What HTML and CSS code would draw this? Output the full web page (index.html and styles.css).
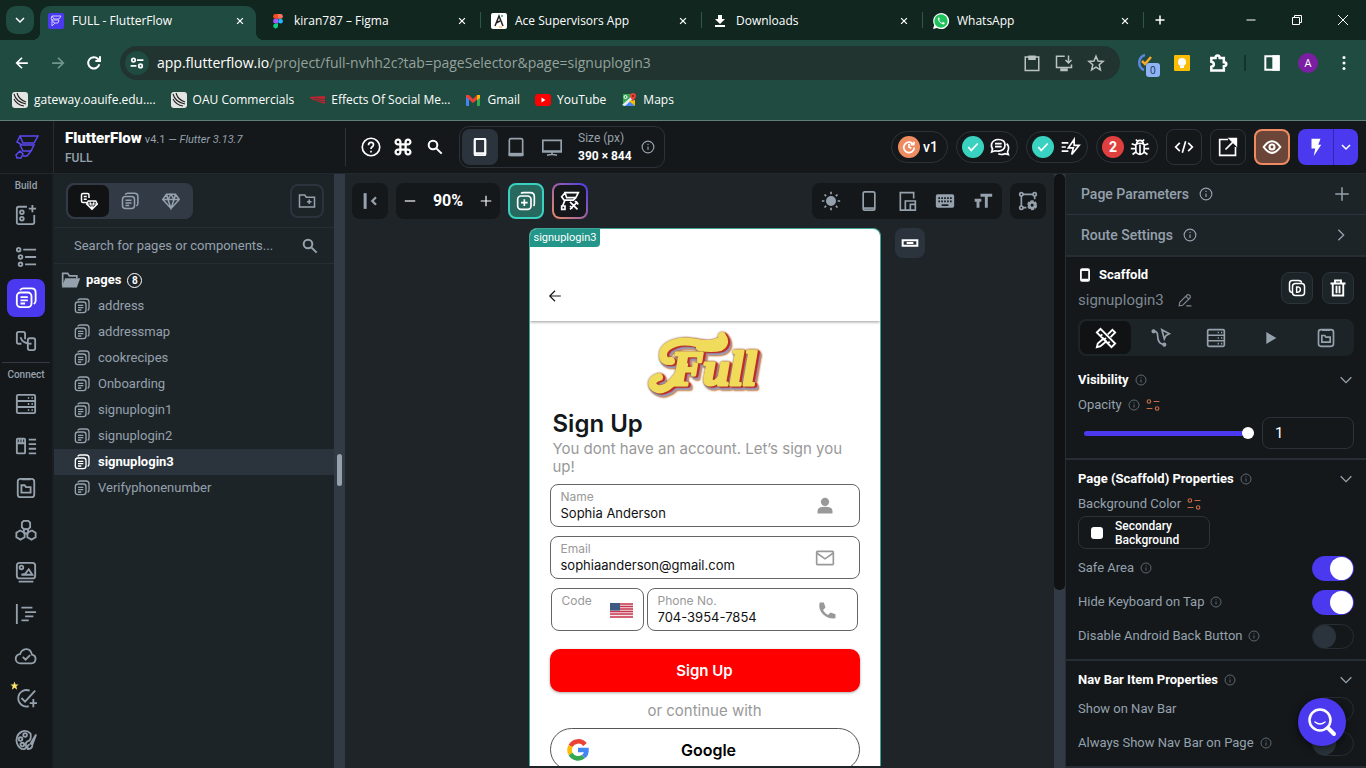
FILE: index.html
```html
<!DOCTYPE html>
<html lang="en">
<head>
<meta charset="utf-8">
<meta name="viewport" content="width=device-width, initial-scale=1">
<title>FULL - FlutterFlow</title>
<link rel="stylesheet" href="styles.css">
</head>
<body>
<svg class="sprite" aria-hidden="true">
  <symbol id="x" viewBox="0 0 24 24"><path d="M5 5l14 14M19 5L5 19"/></symbol>
  <symbol id="plus" viewBox="0 0 24 24"><path d="M12 3v18M3 12h18"/></symbol>
  <symbol id="minus" viewBox="0 0 24 24"><path d="M3 12h18"/></symbol>
  <symbol id="down" viewBox="0 0 24 24"><path d="M4 8l8 8 8-8"/></symbol>
  <symbol id="right" viewBox="0 0 24 24"><path d="M8 4l8 8-8 8"/></symbol>
  <symbol id="back" viewBox="0 0 24 24"><path d="M22 12H3M12 3l-9 9 9 9"/></symbol>
  <symbol id="fwd" viewBox="0 0 24 24"><path d="M2 12h19M12 3l9 9-9 9"/></symbol>
  <symbol id="info" viewBox="0 0 24 24"><circle cx="12" cy="12" r="10"/><path d="M12 11v6M12 6.500v2"/></symbol>
  <symbol id="search" viewBox="0 0 24 24"><circle cx="9" cy="9" r="6.500"/><path d="M14 14l8 8"/></symbol>
  <symbol id="pages" viewBox="0 0 24 24"><rect x="2" y="6" width="16" height="16" rx="4"/><path d="M5.500 3.500Q7 1.500 9 1.500h9q4.500 0 4.500 4.500v9q0 2.500-2 3.500M6 11h8M6 14.500h8M6 18h5"/></symbol>
  <symbol id="server" viewBox="0 0 24 24"><rect x="2" y="2" width="20" height="20" rx="1.500"/><path d="M2 8.700h20M2 15.300h20M14 5.400h1.500M18 5.400h1.500M14 12h1.500M18 12h1.500M14 18.700h1.500M18 18.700h1.500"/></symbol>
  <symbol id="clipfolder" viewBox="0 0 24 24"><rect x="3" y="2" width="18" height="20" rx="3"/><path d="M7 2.500h10M7 9v8h10v-6h-5l-1.500-2z"/></symbol>
  <symbol id="gem" viewBox="0 0 24 24"><path d="M6 3h12l5 7-11 12L1 10zM1 10h22M6 3l2 7 4 12 4-12 2-7M8 10l4-7 4 7"/></symbol>
  <symbol id="phone" viewBox="0 0 24 24"><rect x="5" y="1" width="14" height="22" rx="2"/><path d="M5 20.500h14"/></symbol>
  <symbol id="bind" viewBox="0 0 24 24"><circle cx="5" cy="6" r="3"/><path d="M13 6h10M1 18h10"/><circle cx="19" cy="18" r="3"/></symbol>
  <symbol id="ff" viewBox="0 0 24 24"><path d="M5 1h18l-4 7H8zM5 1L2 7l5 3h12l-3 6H8l-3-6M8 16l8 0-4 5H8M5 16l3 3-2 4H2l-1-3z"/></symbol>
  <symbol id="globe" viewBox="0 0 16 16"><rect width="16" height="16" rx="3" fill="#e3e5e2" stroke="none"/><path d="M2 2q2 8 12 10M5 1q2 7 9 9M2 7q3 6 10 7" stroke="#222" stroke-width="1.100"/></symbol>
</svg>

<header class="browser">
  <div class="tabstrip">
    <button class="tabmenu" aria-label="Search tabs"><svg class="i b s12"><use href="#down"/></svg></button>
    <div class="tab active">
      <svg class="s16" viewBox="0 0 16 16"><rect width="16" height="16" rx="2" fill="#4b39ef"/><path d="M4 3h9l-2 3H6zM4 3L3 6l2 1h6l-1 3H6L4 7v6l3-3" fill="none" stroke="#cfc9ff"/></svg>
      <span>FULL - FlutterFlow</span><button aria-label="Close tab"><svg class="i b s10"><use href="#x"/></svg></button>
    </div>
    <div class="tab">
      <svg class="s16" viewBox="0 0 16 16"><path d="M8 1H5.500a2.400 2.400 0 000 4.800H8z" fill="#f24e1e"/><path d="M8 1h2.500a2.400 2.400 0 010 4.800H8z" fill="#ff7262"/><path d="M8 5.800H5.500a2.400 2.400 0 000 4.800H8z" fill="#a259ff"/><circle cx="10.500" cy="8.200" r="2.400" fill="#1abcfe"/><path d="M8 10.600H5.500A2.400 2.400 0 108 13z" fill="#0acf83"/></svg>
      <span>kiran787 – Figma</span><button aria-label="Close tab"><svg class="i b s10"><use href="#x"/></svg></button>
    </div>
    <div class="tab">
      <svg class="s16" viewBox="0 0 16 16"><rect width="16" height="16" rx="2" fill="#fff"/><path d="M4 13L8 3l4 10M5 10l4-2" fill="none" stroke="#222" stroke-width="1.500"/><path d="M10 3h2" stroke="#23a58a" stroke-width="1.500"/><path d="M8 14h3" stroke="#f5a623"/></svg>
      <span>Ace Supervisors App</span><button aria-label="Close tab"><svg class="i b s10"><use href="#x"/></svg></button>
    </div>
    <div class="tab">
      <svg class="s16" viewBox="0 0 16 16"><path d="M6 2h4v4h3l-5 5-5-5h3zM3 12h10v2H3z" fill="#fff"/></svg>
      <span>Downloads</span><button aria-label="Close tab"><svg class="i b s10"><use href="#x"/></svg></button>
    </div>
    <div class="tab">
      <svg class="s16" viewBox="0 0 16 16"><path d="M0 16l1.200-4A8 8 0 114 14.900z" fill="#fff"/><circle cx="8" cy="8" r="6.700" fill="#1fc15b"/><path d="M5.300 4.500q-1 1.200 0 3 2 3.500 5 4 1.500-.3 1.500-1.600L10 9l-1 1Q7 9 6 7l.8-1-.6-1.600z" fill="#fff"/></svg>
      <span>WhatsApp</span><button aria-label="Close tab"><svg class="i b s10"><use href="#x"/></svg></button>
    </div>
    <button class="newtab" aria-label="New tab"><svg class="i b s12"><use href="#plus"/></svg></button>
    <div class="winbtns">
      <button aria-label="Minimize"><svg class="i s12"><use href="#minus"/></svg></button>
      <button aria-label="Restore"><svg class="i s12" viewBox="0 0 24 24"><path d="M3 7h14v14H3zM7 7V3h14v14h-4"/></svg></button>
      <button aria-label="Close"><svg class="i s12" viewBox="0 0 24 24"><path d="M2 2l20 20M22 2L2 22"/></svg></button>
    </div>
  </div>
  <div class="toolbar">
    <button class="nav" aria-label="Back"><svg class="i b s14"><use href="#back"/></svg></button>
    <button class="nav dim" aria-label="Forward"><svg class="i b s14"><use href="#fwd"/></svg></button>
    <button class="nav" aria-label="Reload"><svg class="i b s16" viewBox="0 0 24 24"><path d="M20 14a8.500 8.500 0 11-2-8l3 3M21 2v7h-7"/></svg></button>
    <div class="omnibox">
      <button class="site" aria-label="Site information"><svg class="i b s14" viewBox="0 0 24 24"><circle cx="6" cy="7" r="3"/><path d="M12 7h11M1 17h10"/><circle cx="18" cy="17" r="3"/></svg></button>
      <p class="url"><b>app.flutterflow.io</b>/project/full-nvhh2c?tab=pageSelector&amp;page=signuplogin3</p>
      <button class="nav" aria-label="Clipboard"><svg class="i s18" viewBox="0 0 24 24"><rect x="3" y="4" width="18" height="18"/><path d="M8 3h8v4H8z" fill="currentColor"/></svg></button>
      <button class="nav" aria-label="Install app"><svg class="i s18" viewBox="0 0 24 24"><path d="M13 3H2v15h20v-4M18 2v9M14 8l4 4 4-4"/><path d="M8 20h8v2H8z"/></svg></button>
      <button class="nav" aria-label="Bookmark"><svg class="i s18" viewBox="0 0 24 24"><path d="M12 3l2.700 6.300 6.800.6-5.200 4.500 1.600 6.700L12 17.500l-5.900 3.600 1.600-6.700L2.500 9.900l6.800-.6z"/></svg></button>
    </div>
    <div class="exts">
      <button class="nav" aria-label="Tasks extension"><svg class="s24" viewBox="0 0 24 24"><path d="M11 4a8 8 0 00-1 15" fill="none" stroke="#5b86e0" stroke-width="2.500"/><path d="M8 10l3 3 6-7" fill="none" stroke="#f7a928" stroke-width="2.500"/><rect x="12" y="12" width="14" height="14" rx="3" fill="#8fb4f6"/><text x="16" y="23" class="cnt">0</text></svg></button>
      <button class="nav" aria-label="Keep extension"><svg class="s16" viewBox="0 0 16 16"><rect width="16" height="16" rx="1" fill="#fbbc04"/><circle cx="8" cy="7" r="4" fill="#fff"/><path d="M6 11h4v2H6z" fill="#fff"/></svg></button>
      <button class="nav" aria-label="Extensions"><svg class="i b s20" viewBox="0 0 24 24"><path d="M4 6h5q0-3 2.500-3T14 6h5v5q3 0 3 2.300T19 16v5H4v-4.500q3-.5 3-3t-3-3z"/></svg></button>
      <span class="vsep"></span>
      <button class="nav" aria-label="Side panel"><svg class="i b s16" viewBox="0 0 24 24"><path d="M2 2h20v20H2z"/><path d="M14 2h8v20h-8z" fill="currentColor"/></svg></button>
      <button class="nav" aria-label="Profile"><span class="avatar">A</span></button>
      <button class="nav" aria-label="Menu"><svg class="s16" viewBox="0 0 16 16" fill="#fff"><circle cx="8" cy="2.500" r="1.500"/><circle cx="8" cy="8" r="1.500"/><circle cx="8" cy="13.500" r="1.500"/></svg></button>
    </div>
  </div>
  <nav class="bookmarks" aria-label="Bookmarks">
    <a href="#"><svg class="i s16"><use href="#globe"/></svg>gateway.oauife.edu....</a>
    <a href="#"><svg class="i s16"><use href="#globe"/></svg>OAU Commercials</a>
    <a href="#"><svg class="s16" viewBox="0 0 16 16"><path d="M0 5l16-1v8L4 8z" fill="#c8202f"/><path d="M4 6.500l12 1M6 8l10 2" stroke="#204b40" stroke-width=".7"/></svg>Effects Of Social Me...</a>
    <a href="#"><svg class="s16" viewBox="0 0 16 16"><path d="M1 3h3v11H2a1 1 0 01-1-1z" fill="#4285f4"/><path d="M12 3h3v10a1 1 0 01-1 1h-2z" fill="#34a853"/><path d="M1 3h3l4 4 4-4h3v2L8 11 1 5z" fill="#ea4335"/><path d="M12 3h3v3l-3 2z" fill="#fbbc04"/></svg>Gmail</a>
    <a href="#"><svg class="s16" viewBox="0 0 16 16"><rect y="2" width="16" height="12" rx="3" fill="#f00"/><path d="M6.500 5.500v5l4-2.500z" fill="#fff"/></svg>YouTube</a>
    <a href="#"><svg class="s16" viewBox="0 0 16 16"><path d="M2 2h9v12H2z" fill="#34a853"/><path d="M2 14l6-6 6 6z" fill="#4285f4"/><path d="M1 13L12 3l2 2-10 9z" fill="#e8eaed"/><path d="M8 9l6 5V8z" fill="#fbbc04"/><path d="M12 9q-3-3-3-5a3 3 0 016 0q0 2-3 5z" fill="#ea4335"/><circle cx="12" cy="4" r="1" fill="#7d1f18"/><circle cx="4.500" cy="5" r="1.500" fill="none" stroke="#fff"/></svg>Maps</a>
  </nav>
</header>

<div class="app">
  <header class="top">
    <a class="logo" href="#" aria-label="FlutterFlow home"><svg class="i s24 thin"><use href="#ff"/></svg></a>
    <div class="brand">
      <p><strong>FlutterFlow</strong> <span>v4.1 — <em>Flutter 3.13.7</em></span></p>
      <p class="proj">FULL</p>
    </div>
    <div class="tools">
      <button class="ic" aria-label="Help"><svg class="i s20" viewBox="0 0 24 24"><circle cx="12" cy="12" r="10.500"/><path d="M9 10q0-3.500 3-3.500t3 2.700q0 1.500-1.500 2.500T12 14.500M12 16.500v2"/></svg></button>
      <button class="ic" aria-label="Commands"><svg class="i b s18" viewBox="0 0 24 24"><path d="M8.500 8.500h7v7h-7zM8.500 8.500H5.500a3.200 3.200 0 113-3zM15.500 8.500v-3a3.200 3.200 0 113 3zM15.500 15.500h3a3.200 3.200 0 11-3 3zM8.500 15.500v3a3.200 3.200 0 11-3-3z"/></svg></button>
      <button class="ic" aria-label="Search"><svg class="i b s16"><use href="#search"/></svg></button>
    </div>
    <div class="devices">
      <button class="sel" aria-label="Phone"><svg class="i b s18"><use href="#phone"/></svg></button>
      <button aria-label="Tablet"><svg class="i s20" viewBox="0 0 24 24"><rect x="4" y="2" width="16" height="20" rx="2"/><path d="M4 20h16v2H4z" fill="currentColor"/></svg></button>
      <button aria-label="Desktop"><svg class="i s20" viewBox="0 0 24 24"><path d="M1 4h22v14H1zM1 17h22M12 18v3M6 22q6-2 12 0"/></svg></button>
      <p class="size">Size (px)<b>390 × 844</b></p>
      <svg class="i s14 grey"><use href="#info"/></svg>
    </div>
    <div class="status">
      <button class="pill ver"><span class="dot orange"><svg class="i b s14" viewBox="0 0 24 24"><path d="M19 7a9 9 0 102 6M21 3l-1 5h-5M12 7v5l4 2"/></svg></span>v1</button>
      <button class="pill" aria-label="Comments"><span class="dot teal"><svg class="i b s14" viewBox="0 0 24 24"><path d="M4 12l5 6L20 6"/></svg></span><svg class="i s20" viewBox="0 0 24 24"><path d="M10 3q8 0 8 6.500T10 17q-2 0-4-.5L2 18l1-4q-2-2-1-6 2-5 8-5zM6 8h8M6 11.500h8M20 8q3 3 2 7l-1 3 1 3-4-1q-5 2-8 0"/></svg></button>
      <button class="pill" aria-label="Actions"><span class="dot teal"><svg class="i b s14" viewBox="0 0 24 24"><path d="M4 12l5 6L20 6"/></svg></span><svg class="i s20" viewBox="0 0 24 24"><path d="M17 3l-7 10h6l-2 8 9-11h-6zM2 7h8M2 12h5M2 17h8"/></svg></button>
      <button class="pill" aria-label="Issues"><span class="dot red">2</span><svg class="i s20" viewBox="0 0 24 24"><path d="M7 9q5-3 10 0v7a5 5 0 01-10 0zM8 8a4 4 0 018 0M12 9v12M7 3l3 3M17 3l-3 3M2 8l5 2M22 8l-5 2M1 14h6M17 14h6M3 21l4-3M21 21l-4-3"/></svg></button>
      <button class="sq line" aria-label="View code"><svg class="i s20" viewBox="0 0 24 24"><path d="M7 7l-5 5 5 5M17 7l5 5-5 5M14 5l-4 14"/></svg></button>
      <button class="sq line" aria-label="Open"><svg class="i s20" viewBox="0 0 24 24"><path d="M12 3H2v19h19V12M9 15L19 5"/><path d="M14 2h8v8z" fill="currentColor"/></svg></button>
      <button class="sq eye" aria-label="Preview"><svg class="i s20" viewBox="0 0 24 24"><path d="M2 12q10-14 20 0-10 14-20 0z" stroke-width="2.500"/><circle cx="12" cy="12" r="3" stroke-width="2.500"/></svg></button>
      <div class="run"><button aria-label="Run"><svg class="s18" viewBox="0 0 24 24" fill="#fff"><path d="M6 1h12l-3 8h4L9 24l2-10H6z"/></svg></button><button aria-label="Run options"><svg class="i b s12"><use href="#down"/></svg></button></div>
    </div>
  </header>

  <div class="work">
    <nav class="rail" aria-label="Build and connect">
      <p>Build</p>
      <a href="#" aria-label="Widgets"><svg class="i s22" viewBox="0 0 24 24"><path d="M13 3H4q-2 0-2 2v15q0 2 2 2h15q2 0 2-2v-8M19 1v8M15 5h8"/><circle cx="7.500" cy="9" r="2"/><circle cx="7.500" cy="16" r="2"/></svg></a>
      <a href="#" aria-label="Widget tree"><svg class="i s22" viewBox="0 0 24 24"><circle cx="4" cy="4" r="2"/><circle cx="6" cy="12" r="2"/><circle cx="6" cy="20" r="2"/><path d="M9 4h14M11 12h12M11 20h12"/></svg></a>
      <a class="sel" href="#" aria-label="Pages"><svg class="i s22"><use href="#pages"/></svg></a>
      <a href="#" aria-label="Storyboard"><svg class="i s22" viewBox="0 0 24 24"><path d="M7 15H4q-2 0-2-2V4q0-2 2-2h5q2 0 2 2v6M14 15V11q0-2 2-2h4q2 0 2 2v9q0 2-2 2h-4q-2 0-2-2zM6 8q2 7 12 7"/></svg></a>
      <hr>
      <p>Connect</p>
      <a href="#" aria-label="Firestore"><svg class="i s22"><use href="#server"/></svg></a>
      <a href="#" aria-label="Data types"><svg class="i s22" viewBox="0 0 24 24"><rect x="2" y="4" width="9" height="16" rx="1"/><path d="M2 9h9M5 4v5M8 4v5M15 5h8M15 10h8M15 15h8M15 20h8"/></svg></a>
      <a href="#" aria-label="App state"><svg class="i s22"><use href="#clipfolder"/></svg></a>
      <a href="#" aria-label="API calls"><svg class="i s22" viewBox="0 0 24 24"><path d="M7.500 9V4l2-2h5l2 2v5l-2 2h-5zM1.500 15l4-2.500 5 2.500v5L6 22.500 1.500 20zM22.500 15l-4-2.500-5 2.500v5l4.500 2.500 4.500-2.500z"/><circle cx="12" cy="13.500" r="2.500"/></svg></a>
      <a href="#" aria-label="Media"><svg class="i s22" viewBox="0 0 24 24"><rect x="2" y="2" width="20" height="17" rx="3"/><circle cx="7" cy="7" r="2"/><path d="M7 15h12l-4-6-4 5zM4 22.500h16"/></svg></a>
      <a href="#" aria-label="Custom code"><svg class="i s22" viewBox="0 0 24 24"><path d="M2 1v22M7 5h12M11 10h12M11 14.500h9M7 19h8"/></svg></a>
      <a href="#" aria-label="Cloud"><svg class="i s22" viewBox="0 0 24 24"><path d="M6 20a5 5 0 01-.5-10Q7 5 12 4.500T18.500 10.500A4.800 4.800 0 0118 20zM8.500 13l3 3 5-5"/></svg></a>
      <a href="#" aria-label="Tests"><svg class="i s22" viewBox="0 0 24 24"><path d="M16 4A9 9 0 1015 21M7 12l4 4L22 4M20 13v9M16 17.500h8"/></svg><svg class="star" viewBox="0 0 24 24"><path d="M12 1l3 8h8l-6 5 2 9-7-5-7 5 2-9-6-5h8z"/></svg></a>
      <a href="#" aria-label="Theme"><svg class="i s22" viewBox="0 0 24 24"><path d="M17 5Q13 1 8 2.500C2 5 1 11 2 15q2 7 8 7 3-1 2-4-1-4 3-5 3-2 2-8zM23 6l-6 10 2 1zM16 17q-3 0-2 5 4 0 5-4"/><circle cx="11" cy="6.500" r="2"/><circle cx="6" cy="11" r="2"/><circle cx="8" cy="17" r="2"/></svg></a>
    </nav>

    <aside class="panel">
      <div class="phead">
        <div class="seg">
          <button class="sel" aria-label="Pages and components"><svg class="i s18" viewBox="0 0 24 24"><path d="M9 14H4q-2 0-2-2V4q0-2 2-2h6q2 0 2 2v4M5 6h4M5 9.500h4M11 12h10l2 4-7 7-7-7z"/><path d="M9 16h14M13 12l3 11 3-11" stroke-width="1.300"/></svg></button>
          <button aria-label="Pages"><svg class="i s18"><use href="#pages"/></svg></button>
          <button aria-label="Components"><svg class="i s18"><use href="#gem"/></svg></button>
        </div>
        <button class="addf" aria-label="New folder"><svg class="i s18" viewBox="0 0 24 24"><path d="M2 4h7l2 3h11v13H2zM15 10v6M12 13h6"/></svg></button>
      </div>
      <div class="find"><input type="text" aria-label="Search for pages or components" placeholder="Search for pages or components..."><svg class="i b s16"><use href="#search"/></svg></div>
      <div class="tree">
        <div class="folder"><svg class="s20" viewBox="0 0 24 24"><path d="M2 19V4h6l2 3h9v3" fill="none" stroke="#95a1ac" stroke-width="2"/><path d="M5 10h18l-4 11H1z" fill="#95a1ac"/></svg><b>pages</b><span class="num">8</span></div>
        <a href="#"><svg class="i s16"><use href="#pages"/></svg>address</a>
        <a href="#"><svg class="i s16"><use href="#pages"/></svg>addressmap</a>
        <a href="#"><svg class="i s16"><use href="#pages"/></svg>cookrecipes</a>
        <a href="#"><svg class="i s16"><use href="#pages"/></svg>Onboarding</a>
        <a href="#"><svg class="i s16"><use href="#pages"/></svg>signuplogin1</a>
        <a href="#"><svg class="i s16"><use href="#pages"/></svg>signuplogin2</a>
        <a class="sel" href="#"><svg class="i s16"><use href="#pages"/></svg>signuplogin3</a>
        <a href="#"><svg class="i s16"><use href="#pages"/></svg>Verifyphonenumber</a>
      </div>
    </aside>
    <div class="grip"><span></span></div>

    <main class="canvas">
      <div class="cbar">
        <button class="sq dark grey" aria-label="Collapse panel"><svg class="i b s18" viewBox="0 0 24 24"><path d="M5 3h1v18H5z" fill="currentColor"/><path d="M20 7l-5 5 5 5"/></svg></button>
        <div class="zoom"><button aria-label="Zoom out"><svg class="i s14"><use href="#minus"/></svg></button><b>90%</b><button aria-label="Zoom in"><svg class="i s14"><use href="#plus"/></svg></button></div>
        <button class="sq add" aria-label="Add page"><svg class="i s20" viewBox="0 0 24 24"><rect x="2" y="6" width="16" height="16" rx="4"/><path d="M6 3q1-1 3-1h8q5 0 5 5v8q0 2-1 3M10 10v8M6 14h8"/></svg></button>
        <button class="sq ai" aria-label="AI generate"><svg class="i s20" viewBox="0 0 24 24"><path d="M6 2h16l-3 6H8zM6 2L2 7l3 4M19 8l-3 3H6l-3 7M2 18h4v4H2zM12 13l9 9M21 13l-9 9M18 12l4 4M12 18l3 3"/></svg></button>
        <div class="modes">
          <button aria-label="Light mode"><svg class="i s20" viewBox="0 0 24 24"><circle cx="12" cy="12" r="5" fill="currentColor"/><path d="M12 1v3M12 20v3M1 12h3M20 12h3M4.200 4.200l2 2M17.800 17.800l2 2M4.200 19.800l2-2M17.800 6.200l2-2"/></svg></button>
          <button aria-label="Device frame"><svg class="i s20"><use href="#phone"/></svg></button>
          <button aria-label="Safe area"><svg class="i s20" viewBox="0 0 24 24"><path d="M9 23H4V2h16v7M10 23V12h12v11zM16 22v-6h5"/></svg></button>
          <button aria-label="Keyboard"><svg class="s20" viewBox="0 0 24 24" fill="currentColor"><rect x="1" y="4" width="22" height="16" rx="2"/><path d="M4 8.500h16M4 12.500h16" stroke="#14181b" stroke-width="2" stroke-dasharray="2 1.500"/><path d="M8 17h8" stroke="#14181b" stroke-width="2"/></svg></button>
          <button aria-label="Text scale"><svg class="i s20" viewBox="0 0 24 24"><path d="M9 5h14M16 5v15M2 11h8M6 11v9" stroke-width="3.500"/></svg></button>
        </div>
        <button class="sq dark grey" aria-label="Canvas settings"><svg class="i s20" viewBox="0 0 24 24"><circle cx="4" cy="4" r="2"/><circle cx="20" cy="4" r="2"/><circle cx="4" cy="20" r="2"/><path d="M6 4h12M4 6v12M20 6v4M6 20h4"/><circle cx="17" cy="17" r="4" stroke-width="4" stroke-dasharray="3 1.200"/><circle cx="17" cy="17" r="3.500" stroke-width="3"/></svg></button>
      </div>
      <div class="stage">
        <section class="phone" aria-label="signuplogin3 preview">
          <span class="tag">signuplogin3</span>
          <div class="appbar"><button aria-label="Go back"><svg class="i s14"><use href="#back"/></svg></button></div>
          <form class="form">
            <svg class="full" viewBox="0 0 116 66" role="img" aria-label="Full">
              <path d="M12 46q-9 3-6 9 5 6 14 1 10-7 17-22M24 30q-8 1-8-6 0-8 12-12 9-3 22 0t23-2q4-1 2-5 5 7-2 11-8 2-20 0"/>
              <text x="24" y="54">Full</text>
            </svg>
            <h1>Sign Up</h1>
            <p class="sub">You dont have an account. Let’s sign you up!</p>
            <div class="field"><label for="nm">Name</label><input id="nm" type="text" value="Sophia Anderson"><svg class="s20" viewBox="0 0 24 24" fill="#999"><circle cx="12" cy="7" r="5"/><path d="M3 21v-3q0-5 9-5t9 5v3z"/></svg></div>
            <div class="field"><label for="em">Email</label><input id="em" type="text" value="sophiaanderson@gmail.com"><svg class="i s20" viewBox="0 0 24 24"><rect x="2" y="4" width="20" height="16" rx="1"/><path d="M2 6l10 7 10-7"/></svg></div>
            <div class="pair">
              <div class="field code"><label for="cd">Code</label><input id="cd" type="text" value=""><svg class="flag" viewBox="0 0 23 15"><path d="M0 0h23v15H0z" fill="#f4e6e8"/><path d="M0 1h23M0 3.500h23M0 6h23M0 8.500h23M0 11h23M0 14h23" stroke="#c8374f" stroke-width="1.300"/><path d="M0 0h10v7.500H0z" fill="#3c5a82"/></svg></div>
              <div class="field tel"><label for="ph">Phone No.</label><input id="ph" type="text" value="704-3954-7854"><svg class="s20" viewBox="0 0 24 24" fill="#999"><path d="M2 3h5l2 6-3 3q2 4 6 6l3-3 6 2v5Q12 23 6 17T2 3z"/></svg></div>
            </div>
            <button type="button" class="go">Sign Up</button>
            <p class="or">or continue with</p>
            <button type="button" class="google"><svg class="s24" viewBox="0 0 24 24" fill="none" stroke-width="4.500"><path d="M19 6.500A8.800 8.800 0 004.500 8" stroke="#ea4335"/><path d="M4.500 8a9 9 0 000 8" stroke="#fbbc04"/><path d="M4.500 16a8.800 8.800 0 0013 2.500" stroke="#34a853"/><path d="M17.500 18.500q3.200-2.500 3-6.500H12" stroke="#4285f4"/></svg><span>Google</span></button>
          </form>
        </section>
        <button class="mini" aria-label="Component link"><svg class="i b s16" viewBox="0 0 24 24"><path d="M1 8h22v8H1zM7 12h10"/></svg></button>
      </div>
    </main>
    <div class="vbar"><span></span></div>

    <aside class="props">
      <div class="prow"><b>Page Parameters</b><svg class="i s14"><use href="#info"/></svg><button aria-label="Add parameter"><svg class="i s18"><use href="#plus"/></svg></button></div>
      <div class="prow last"><b>Route Settings</b><svg class="i s14"><use href="#info"/></svg><button aria-label="Open route settings"><svg class="i s16"><use href="#right"/></svg></button></div>
      <div class="ident">
        <div class="who">
          <p class="kind"><svg class="i b s14" viewBox="0 0 24 24"><rect x="5" y="2" width="14" height="20" rx="2"/><path d="M6 3.500h12M6 20h12"/></svg>Scaffold</p>
          <p class="name">signuplogin3<button aria-label="Rename"><svg class="i s14" viewBox="0 0 24 24"><path d="M2 22l1-6L16 3q3-1 5 2v3L8 21zM14 6l4 4M14 22h9"/></svg></button></p>
        </div>
        <button class="act" aria-label="Duplicate"><svg class="i s18" viewBox="0 0 24 24"><path d="M6 18Q2 18 2 14V6q0-4 4-4h8q4 0 4 3"/><rect x="6" y="6" width="16" height="16" rx="4"/><path d="M11.500 10.500v7h2q3-.5 3-3.500t-3-3.500z"/></svg></button>
        <button class="act" aria-label="Delete"><svg class="i s18" viewBox="0 0 24 24"><path d="M2 6h20M8 5V2h8v3M5 7v15h14V7M10 9v10M14 9v10" stroke-width="2.500"/></svg></button>
      </div>
      <div class="tabs">
        <button class="sel" aria-label="Properties"><svg class="i s22" viewBox="0 0 24 24"><path d="M2 6l4-4 16 16-4 4zM6 10l2-2M10 14l2-2M14 18l2-2M14 8l5-5 3 3-5 5M10 12l-7 6-1 4 4-1 7-6"/></svg></button>
        <button aria-label="Actions"><svg class="i s20" viewBox="0 0 24 24"><circle cx="3" cy="4" r="1.500" fill="currentColor"/><circle cx="16" cy="20" r="1.500" fill="currentColor"/><path d="M4 4q4 0 4 6 0 9 8 10M13 2l9 5-4 2-2 4z"/></svg></button>
        <button aria-label="Backend query"><svg class="i s20"><use href="#server"/></svg></button>
        <button aria-label="Animations"><svg class="s16" viewBox="0 0 24 24" fill="currentColor"><path d="M5 3v18l15-9z"/></svg></button>
        <button aria-label="State"><svg class="i s20"><use href="#clipfolder"/></svg></button>
      </div>
      <div class="group">
        <div class="ghead">Visibility<svg class="i s12"><use href="#info"/></svg><button aria-label="Collapse"><svg class="i s16"><use href="#down"/></svg></button></div>
        <div class="lab"><label for="op">Opacity</label><svg class="i s12"><use href="#info"/></svg><svg class="i s14 bind"><use href="#bind"/></svg></div>
        <div class="slide"><input id="op" type="range" min="0" max="1" step="0.1" value="1"><input type="text" aria-label="Opacity value" value="1"></div>
      </div>
      <div class="group">
        <div class="ghead">Page (Scaffold) Properties<svg class="i s12"><use href="#info"/></svg><button aria-label="Collapse"><svg class="i s16"><use href="#down"/></svg></button></div>
        <div class="lab">Background Color<svg class="i s14 bind"><use href="#bind"/></svg></div>
        <button class="color"><i></i><span>Secondary Background</span></button>
        <div class="opt"><label for="sa">Safe Area</label><svg class="i s12"><use href="#info"/></svg><input id="sa" type="checkbox" checked></div>
        <div class="opt"><label for="hk">Hide Keyboard on Tap</label><svg class="i s12"><use href="#info"/></svg><input id="hk" type="checkbox" checked></div>
        <div class="opt"><label for="db">Disable Android Back Button</label><svg class="i s12"><use href="#info"/></svg><input id="db" type="checkbox"></div>
      </div>
      <div class="group">
        <div class="ghead">Nav Bar Item Properties<svg class="i s12"><use href="#info"/></svg><button aria-label="Collapse"><svg class="i s16"><use href="#down"/></svg></button></div>
        <div class="opt"><label for="nb">Show on Nav Bar</label><input id="nb" type="checkbox"></div>
        <div class="opt"><label for="an">Always Show Nav Bar on Page</label><svg class="i s12"><use href="#info"/></svg><input id="an" type="checkbox"></div>
      </div>
    </aside>
  </div>
  <button class="fab" aria-label="Help search"><svg class="s30" viewBox="0 0 30 30" fill="none" stroke="#fff" stroke-linecap="round"><circle cx="13" cy="13" r="10.500" stroke-width="2.500"/><path d="M8 15q5 4 10 0" stroke-width="1.500"/><path d="M21 21l6 6" stroke-width="4"/></svg></button>
</div>
</body>
</html>
```
FILE: styles.css
```css
* { box-sizing: border-box; }
body { margin: 0; height: 100vh; overflow: hidden; display: flex; flex-direction: column; background: #14181b; color: #fff; font: 13px/18px Roboto, "Liberation Sans", sans-serif; }
p, h1 { margin: 0; }
a { color: inherit; text-decoration: none; }
button { font: inherit; color: inherit; background: none; border: 0; padding: 0; display: flex; align-items: center; justify-content: center; }
input { font: inherit; color: inherit; background: none; border: 0; padding: 0; margin: 0; min-width: 0; }
svg { flex: none; display: block; overflow: visible; }
.sprite { position: absolute; width: 0; height: 0; }
.i { fill: none; stroke: currentColor; stroke-width: 2; }
.b { stroke-width: 3; }
.thin { stroke-width: 1.500; }
.s10 { width: 10px; height: 10px; }
.s12 { width: 12px; height: 12px; }
.s14 { width: 14px; height: 14px; }
.s16 { width: 16px; height: 16px; }
.s18 { width: 18px; height: 18px; }
.s20 { width: 20px; height: 20px; }
.s22 { width: 22px; height: 22px; }
.s24 { width: 24px; height: 24px; }
.s30 { width: 30px; height: 30px; }
.grey { color: #95a1ac; }

/* browser frame */
.browser { flex: none; background: #204b40; border-bottom: 1px solid #5f7f76; font-family: "Open Sans", "Noto Sans", sans-serif; font-size: 12px; }
.tabstrip { display: flex; align-items: center; height: 40px; background: #11261f; padding-left: 6px; }
.tabmenu { width: 28px; height: 28px; border-radius: 10px; background: #204b40; margin-right: 6px; }
.tab { display: flex; align-items: center; gap: 8px; width: 216px; height: 34px; margin: 6px 5px 0 0; padding: 0 8px 5px; position: relative; }
.tab span { flex: 1; white-space: nowrap; }
.tab button { width: 16px; height: 16px; }
.tab.active { background: #204b40; border-radius: 10px 10px 0 0; margin-right: 6px; }
.tab.active::before, .tab.active::after { content: ""; position: absolute; bottom: 0; width: 8px; height: 8px; }
.tab.active::before { left: -8px; background: radial-gradient(circle at 0 0, transparent 8px, #204b40 8px); }
.tab.active::after { right: -8px; background: radial-gradient(circle at 100% 0, transparent 8px, #204b40 8px); }
.tab:not(.active)::after { content: ""; position: absolute; right: -3px; top: 6px; width: 1px; height: 16px; background: #2b5a4d; }
.newtab { width: 28px; height: 28px; }
.winbtns { display: flex; margin-left: auto; }
.winbtns button { width: 46px; height: 40px; }
.toolbar { display: flex; align-items: center; height: 46px; padding: 0 4px; }
.nav { width: 36px; height: 28px; }
.dim { color: #71968b; }
.omnibox { flex: 1; display: flex; align-items: center; height: 34px; margin-left: 8px; padding: 0 8px 0 5px; border-radius: 17px; background: #22342f; }
.omnibox .nav { width: 32px; color: #b9c4c0; }
.site { width: 24px; height: 24px; border-radius: 12px; background: #204b40; }
.url { flex: 1; margin-left: 8px; font-size: 14px; color: #93a39e; white-space: nowrap; }
.url b { font-weight: 400; color: #fff; }
.exts { display: flex; align-items: center; margin-left: 8px; }
.vsep { width: 2px; height: 16px; margin: 0 8px; background: #13342b; }
.cnt { font-size: 10px; fill: #1a2b50; }
.avatar { width: 20px; height: 20px; border-radius: 10px; background: #7b1fa2; font-size: 11px; line-height: 20px; }
.bookmarks { display: flex; align-items: center; gap: 15px; height: 34px; padding: 0 12px 6px; }
.bookmarks a { display: flex; align-items: center; gap: 6px; white-space: nowrap; }

/* app header */
.app { flex: 1; min-height: 0; display: flex; flex-direction: column; position: relative; }
.top { display: flex; align-items: center; height: 53px; flex: none; border-bottom: 1px solid #22282d; }
.logo { width: 54px; height: 100%; display: flex; align-items: center; justify-content: center; border-right: 1px solid #262d34; color: #5b48f5; }
.brand { width: 292px; padding-left: 11px; line-height: 20px; border-right: 1px solid #2b323a; color: #95a1ac; white-space: nowrap; }
.brand strong { font-size: 15px; font-weight: 900; color: #fff; }
.brand span { font-size: 11px; }
.brand .proj { font-size: 12px; line-height: 16px; font-weight: 500; }
.tools { display: flex; padding: 0 8px 0 9px; }
.ic { width: 32px; height: 32px; }
.devices { display: flex; align-items: center; height: 42px; padding: 0 9px 0 2px; border: 1px solid #2b323a; border-radius: 10px; color: #95a1ac; }
.devices button { width: 36px; height: 36px; }
.devices .sel { background: #2b343d; border-radius: 8px; color: #fff; }
.size { width: 71px; padding-left: 8px; font-size: 12px; white-space: nowrap; }
.size b { display: block; color: #fff; font-size: 12px; font-weight: 700; }
.size, .size b { line-height: 18px; }
.status { display: flex; align-items: center; gap: 8px; margin-left: auto; padding-right: 8px; }
.pill { height: 32px; padding: 0 7px 0 5px; gap: 6px; border: 1px solid #2b323a; border-radius: 16px; font-size: 14px; font-weight: 500; }
.pill.ver { padding: 0 9px 0 6px; gap: 3px; }
.dot { width: 22px; height: 22px; border-radius: 11px; display: flex; align-items: center; justify-content: center; font-weight: 700; }
.orange { background: #ee8b60; }
.teal { background: #39d2c0; }
.red { background: #df3f3f; }
.sq { width: 36px; height: 36px; border-radius: 8px; flex: none; }
.line { border: 1px solid #2b323a; }
.eye { background: #6b4538; border: 2px solid #ee8b60; }
.run { display: flex; height: 36px; border-radius: 8px; background: #4b39ef; }
.run button { width: 35px; }
.run button + button { width: 25px; border-left: 1px solid #3425b8; }

/* rail and page list */
.work { flex: 1; min-height: 0; display: flex; }
.rail { width: 54px; flex: none; border-right: 2px solid #1a1f24; color: #95a1ac; font-size: 10px; font-weight: 500; text-align: center; overflow: hidden; }
.rail p { padding-top: 3px; line-height: 17px; }
.rail a { height: 42px; display: flex; align-items: center; justify-content: center; position: relative; }
.rail a.sel { height: 38px; margin: 1px 7px 3px; border-radius: 8px; background: #4b39ef; color: #fff; }
.rail hr { height: 1px; margin: 0 2px; border: 0; background: #323b45; }
.star { position: absolute; left: 10px; top: 4px; width: 9px; height: 9px; fill: #f9e36b; }
.panel { width: 280px; flex: none; background: #1d2428; color: #95a1ac; }
.phead { display: flex; align-items: center; justify-content: space-between; height: 54px; padding: 0 10px 0 12px; border-bottom: 1px solid #262d34; }
.seg { display: flex; height: 36px; padding: 2px; border-radius: 8px; background: #323b45; }
.seg button { width: 41px; }
.seg .sel { background: #101213; border-radius: 7px; color: #fff; }
.addf { width: 34px; height: 34px; border: 2px solid #2b343d; border-radius: 8px; }
.find { display: flex; align-items: center; height: 36px; padding: 0 16px 0 20px; border-bottom: 1px solid #262d34; }
.find input { flex: 1; }
.find input::placeholder { color: #95a1ac; opacity: 1; }
.tree { padding-top: 3px; }
.folder { display: flex; align-items: center; height: 26px; padding-left: 7px; color: #fff; }
.folder b { margin: 0 6px 0 5px; }
.num { width: 15px; height: 15px; border: 1px solid #fff; border-radius: 8px; font-size: 10px; line-height: 13px; text-align: center; font-weight: 700; }
.tree a { display: flex; align-items: center; gap: 8px; height: 26px; padding-left: 20px; }
.tree a.sel { background: #2b343d; color: #fff; font-weight: 700; }
.grip, .vbar { width: 11px; flex: none; background: #323b45; }
.grip span { display: block; width: 5px; height: 32px; margin: 280px auto 0; border-radius: 3px; background: #95a1ac; }
.vbar span { display: block; height: 70%; border-radius: 5px; background: #101213; }

/* canvas */
.canvas { flex: 1; min-width: 0; display: flex; flex-direction: column; background: #1f2428; padding-bottom: 2px; }
.cbar { display: flex; gap: 8px; flex: none; padding: 9px 8px 9px 7px; }
.dark, .zoom, .modes { background: #14181b; border-radius: 8px; }
.zoom { display: flex; align-items: center; justify-content: space-between; width: 104px; padding: 0 7px; font-size: 16px; }
.add { background: #27695f; border: 2px solid #39d2c0; }
.ai { border: 2px solid transparent; background: linear-gradient(#14181b, #14181b) padding-box, linear-gradient(45deg, #ee8b60, #4b39ef) border-box; }
.modes { display: flex; margin-left: auto; color: #95a1ac; }
.modes button { width: 38px; height: 36px; }
.stage { flex: 1; min-height: 0; display: grid; grid-template-columns: 1fr 352px 1fr; gap: 14px; padding-left: 10px; overflow: hidden; }
.phone { grid-column: 2; position: relative; background: #fff; color: #14181b; border: 1px solid #3fa596; border-bottom: 0; border-radius: 8px 8px 0 0; overflow: hidden; font-family: Inter, Roboto, sans-serif; }
.tag { position: absolute; left: 0; top: 0; padding: 0 4px; border-radius: 0 0 4px 0; background: #249689; color: #fff; font-family: Roboto, sans-serif; font-size: 11px; line-height: 18px; }
.appbar { height: 92px; padding: 60px 0 0 18px; box-shadow: 0 1px 3px #0006; }
.form { padding: 10px 20px 0; display: flex; flex-direction: column; }
.full { width: 116px; height: 66px; align-self: center; filter: drop-shadow(0 0 1px #8a5a2c) drop-shadow(2px 1px 0 #cf2024) drop-shadow(1px 2px 0 #8ea6cc) drop-shadow(1px 1px 0 #e08a3c); }
.full text { font: italic 700 48px "Liberation Serif", serif; fill: #f0dc5a; stroke: #f0dc5a; stroke-width: 3; stroke-linejoin: round; }
.full path { fill: none; stroke: #f0dc5a; stroke-width: 8; stroke-linecap: round; stroke-linejoin: round; }
h1 { margin: 11px 0 0 3px; font-size: 24px; line-height: 32px; font-weight: 600; }
.sub { margin: 0 0 8px 3px; font-size: 15px; line-height: 18px; color: #999; }
.field { position: relative; flex: none; height: 43px; margin-bottom: 9px; padding: 4px 0 0 10px; border: 1px solid #666; border-radius: 8px; color: #999; display: flex; flex-direction: column; }
.field label { font-size: 12px; line-height: 16px; }
.field input { width: 220px; height: 16px; font-size: 13px; color: #111; }
.field svg { position: absolute; right: 24px; top: 11px; }
.pair { display: grid; grid-template-columns: 93px 1fr; gap: 3px; padding: 0 2px 0 1px; }
.code input { width: 40px; }
.field .flag { width: 23px; height: 15px; right: 10px; top: 14px; }
.tel input { width: 130px; }
.field.tel svg { right: 19px; }
.go { height: 43px; margin-top: 9px; border-radius: 10px; background: #f00; color: #fff; font-size: 15px; font-weight: 600; box-shadow: 0 1px 3px #0005; }
.or { margin: 10px 0 8px; color: #999; font-size: 15px; text-align: center; }
.google { position: relative; height: 43px; border: 1px solid #555; border-radius: 22px; font-size: 16px; font-weight: 600; color: #000; padding-left: 8px; }
.google svg { position: absolute; left: 15px; top: 9px; }
.mini { width: 30px; height: 30px; border-radius: 8px; background: #2b343d; }

/* properties */
.props { width: 301px; flex: none; border-left: 1px solid #262d34; color: #95a1ac; overflow: hidden; }
.prow { display: flex; align-items: center; gap: 10px; height: 41px; padding: 0 15px; background: #1d2428; border-bottom: 1px solid #2b343d; font-size: 14px; }
.prow b { font-weight: 500; }
.prow button { margin-left: auto; }
.last { height: 42px; padding-right: 17px; border-bottom: 2px solid #262d34; }
.ident { display: flex; align-items: center; gap: 9px; padding: 6px 12px 4px; }
.who { flex: 1; }
.kind { display: flex; align-items: center; gap: 7px; line-height: 24px; color: #fff; font-weight: 700; }
.name { display: flex; gap: 14px; font-size: 15px; line-height: 26px; color: #7d8791; }
.act { width: 32px; height: 32px; border: 1px solid #2b343d; border-radius: 8px; background: #1d2428; color: #fff; }
.tabs { display: grid; grid-template-columns: repeat(5, 1fr); height: 37px; margin: 2px 12px 11px; padding: 2px 0; border-radius: 8px; background: #1d2428; }
.tabs .sel { margin: 0 2px; background: #101213; border-radius: 7px; color: #fff; }
.group { padding: 0 12px 9px; border-bottom: 2px solid #262d34; }
.group + .group { padding-top: 6px; padding-bottom: 6px; }
.ghead { display: flex; align-items: center; gap: 6px; height: 25px; color: #fff; font-weight: 700; }
.ghead svg, .lab svg, .opt svg { color: #5d6771; }
.ghead button { margin-left: auto; }
.ghead button svg { color: #95a1ac; }
.lab { display: flex; align-items: center; gap: 6px; height: 25px; }
.lab .bind { color: #c76a47; }
.slide { display: flex; align-items: center; gap: 8px; }
.slide [type=range] { flex: 1; appearance: none; height: 12px; margin-left: 6px; }
.slide [type=range]::-webkit-slider-runnable-track { height: 5px; border-radius: 3px; background: #4b39ef; }
.slide [type=range]::-webkit-slider-thumb { appearance: none; width: 12px; height: 12px; margin-top: -4px; border-radius: 6px; background: #fff; }
.slide [type=text] { width: 92px; height: 32px; padding-left: 12px; border: 1px solid #2b323a; border-radius: 8px; font-size: 15px; color: #fff; }
.color { width: 132px; height: 33px; margin-bottom: 2px; padding-left: 12px; gap: 12px; justify-content: flex-start; border: 1px solid #2b323a; border-radius: 8px; color: #fff; font-size: 12px; line-height: 14px; font-weight: 500; text-align: left; }
.color i { flex: none; width: 12px; height: 12px; border-radius: 3px; background: #fff; }
.opt { display: flex; align-items: center; gap: 6px; height: 34px; }
.opt input { appearance: none; width: 42px; height: 25px; margin-left: auto; border: 1px solid #262d34; border-radius: 13px; }
.opt input::before { content: ""; display: block; width: 23px; height: 23px; border-radius: 12px; background: #2b343d; }
.opt input:checked { background: #4b39ef; border-color: #4b39ef; }
.opt input:checked::before { margin-left: 17px; background: #fff; }
.fab { position: absolute; right: 20px; bottom: 22px; width: 48px; height: 48px; border-radius: 24px; background: #4b39ef; box-shadow: 0 2px 8px #0008; }
```
